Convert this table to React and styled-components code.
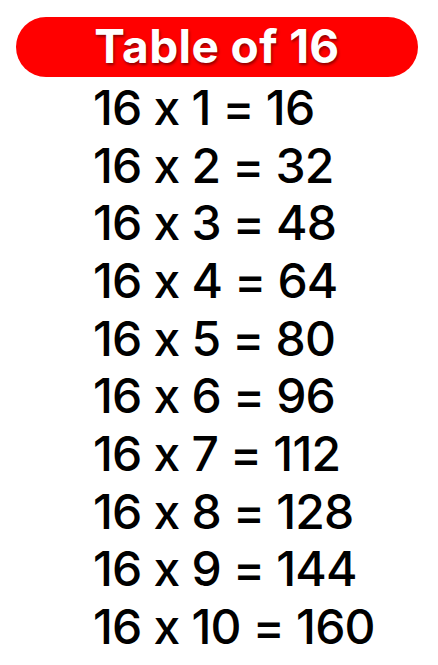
import React from "react";
import styled, { createGlobalStyle } from "styled-components";

const GlobalStyle = createGlobalStyle`
  html, body { margin: 0; padding: 0; background: #ffffff; }
  body { font-family: Inter, "Liberation Sans", sans-serif; }
`;

const Page = styled.main`
  width: 438px;
  height: 665px;
  padding-top: 17px;
  box-sizing: border-box;
  display: flex;
  flex-direction: column;
  align-items: center;
  background: #ffffff;
`;

const TitleBar = styled.h1`
  margin: 0;
  width: 402px;
  height: 60px;
  margin-left: -4px;
  border-radius: 30px;
  background: #ff0000;
  display: flex;
  align-items: center;
  justify-content: center;
  color: #ffffff;
  font-family: Inter, sans-serif;
  font-weight: 700;
  font-size: 46px;
  letter-spacing: 0.4px;
  text-shadow: 1px 2px 3px rgba(0, 0, 0, 0.45);
  font-feature-settings: "calt" 0;
  line-height: 1;
  padding-bottom: 2px;
  box-sizing: border-box;
`;

const List = styled.ol`
  list-style: none;
  margin: 2px 0 0 0;
  padding: 0 0 0 93px;
  align-self: stretch;
`;

const Row = styled.li`
  font-family: Inter, sans-serif;
  font-weight: 500;
  font-size: 48px;
  line-height: 57.67px;
  letter-spacing: -0.8px;
  color: #000000;
  white-space: nowrap;
  font-feature-settings: "calt" 0, "case" 0;
`;

export default function App() {
  const rows = Array.from({ length: 10 }, (_, i) => i + 1);
  return (
    <>
      <GlobalStyle />
      <Page>
        <TitleBar>Table of 16</TitleBar>
        <List>
          {rows.map((n) => (
            <Row key={n}>
              16 x {n} = {16 * n}
            </Row>
          ))}
        </List>
      </Page>
    </>
  );
}
